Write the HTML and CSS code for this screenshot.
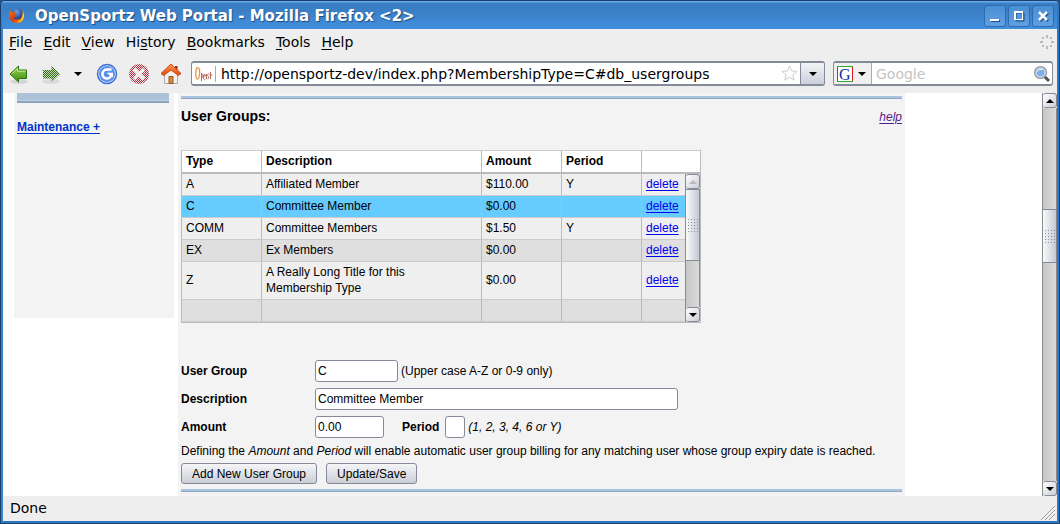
FILE: index.html
```html
<!DOCTYPE html>
<html lang="en">
<head>
<meta charset="utf-8">
<title>OpenSportz Web Portal</title>
<link rel="stylesheet" href="styles.css">
</head>
<body>
<div class="window">
  <header class="titlebar">
    <svg class="app-icon" width="16" height="16" viewBox="0 0 16 16">
      <defs><radialGradient id="globe" cx=".45" cy=".3" r=".7"><stop offset="0" stop-color="#6aa5e8"/><stop offset="1" stop-color="#12256b"/></radialGradient>
      <linearGradient id="fox" x1="0" y1="0" x2="1" y2="1"><stop offset="0" stop-color="#e87a1a"/><stop offset=".5" stop-color="#d83a10"/><stop offset="1" stop-color="#ffb31a"/></linearGradient></defs>
      <circle cx="8" cy="6.500" r="6.300" fill="url(#globe)"/>
      <path d="M1.500 2C-.5 5.500-.2 10 2 12.500c3.500 4 9.500 3.500 12-.5 2-3 1.700-6.500-.5-9.500.5 2 .3 4-.4 5.500-.6 2-1.800 3.200-3.600 3.200-2.500.4-4.500-.5-5-2.200 1 .4 2 .2 3-.6-1.500-.3-2-1.200-1.200-2.400l1.500-1C6.500 4 5 4 4 4.500 2.800 4 2 3.300 1.500 2z" fill="url(#fox)"/>
      <path d="M13.500 2.500c.6 2 .3 4-.4 5.500C13 11 11.500 13 8 14c4 .5 7-2.500 7-6.500 0-2-.5-3.500-1.500-5z" fill="#ffc832"/>
    </svg>
    <h1 class="title">OpenSportz Web Portal - Mozilla Firefox &lt;2&gt;</h1>
    <div class="window-buttons">
      <button class="win-btn" aria-label="Minimize"><svg width="12" height="12"><path d="M2 10h9v2H2z" fill="#1d4c80"/><path d="M1 9h9v2H1z" fill="#fff"/></svg></button>
      <button class="win-btn" aria-label="Maximize"><svg width="12" height="12"><path d="M3 3h8v8H3z" fill="none" stroke="#1d4c80"/><path d="M1 1h9v9H1zM3 3v6h6V3z" fill="#fff" fill-rule="evenodd"/></svg></button>
      <button class="win-btn" aria-label="Close"><svg width="12" height="12"><path d="M3 3l8 8M11 3l-8 8" stroke="#1d4c80" stroke-width="2.500"/><path d="M2 2l8 8M10 2l-8 8" stroke="#fff" stroke-width="2.500"/></svg></button>
    </div>
  </header>

  <nav class="menubar">
    <button><u>F</u>ile</button><button><u>E</u>dit</button><button><u>V</u>iew</button><button>Hi<u>s</u>tory</button><button><u>B</u>ookmarks</button><button><u>T</u>ools</button><button><u>H</u>elp</button>
    <svg class="throbber" width="14" height="14" viewBox="-7 -7 14 14"><g fill="#b9b9b9"><path d="M-1-7h2v3h-2zM-1 4h2v3h-2zM-7-1h3v2h-3zM4-1h3v2h-3zM-5-5h2v2h-2zM3-5h2v2h-2zM-5 3h2v2h-2zM3 3h2v2h-2z"/></g></svg>
  </nav>

  <div class="toolbar">
    <svg width="0" height="0" class="defs"><defs>
      <linearGradient id="green" x1="0" y1="0" x2="0" y2="1"><stop offset="0" stop-color="#9ed44e"/><stop offset="1" stop-color="#3a8c14"/></linearGradient>
      <pattern id="gdots" width="2" height="2" patternUnits="userSpaceOnUse"><path d="M0 0h1v1H0zM1 1h1v1H1z" fill="#2c6a12"/></pattern>
      <pattern id="rdots" width="2" height="2" patternUnits="userSpaceOnUse"><path d="M0 0h1v1H0zM1 1h1v1H1z" fill="#a83040"/></pattern>
      <linearGradient id="roof" x1="0" y1="0" x2="0" y2="1"><stop offset="0" stop-color="#ff9a55"/><stop offset="1" stop-color="#e2470b"/></linearGradient>
    </defs></svg>
    <button class="tool" aria-label="Back"><svg width="22" height="22"><ellipse cx="11" cy="18.500" rx="9" ry="2.500" fill="#000" opacity=".1"/><path d="M2 11L10.500 3V7H18.500V15.500H10.500V19Z" fill="url(#green)" stroke="#2c7610" stroke-linejoin="round"/><path d="M4 10.500L9.500 5.500V8.200H17.500" fill="none" stroke="#c8eb98"/></svg></button>
    <button class="tool" aria-label="Forward"><svg width="22" height="22"><ellipse cx="11" cy="18.500" rx="9" ry="2.500" fill="#000" opacity=".08"/><path d="M20 11L11.500 3V7H3V15.500H11.500V19Z" fill="#c9dcbf"/><path d="M20 11L11.500 3V7H3V15.500H11.500V19Z" fill="url(#gdots)"/></svg></button>
    <button class="tool tool-small" aria-label="Recent pages"><svg width="8" height="4"><path d="M0 0h8L4 4z"/></svg></button>
    <button class="tool" aria-label="Reload"><svg width="22" height="22"><circle cx="11" cy="11" r="9.500" fill="#dfeaff" stroke="#3f70d8" stroke-width="1.500"/><circle cx="11" cy="11" r="8" fill="#5a90ea"/><path d="M15.500 6.500H11A4.500 4.500 0 1 0 15.300 12" fill="none" stroke="#fff" stroke-width="2.600"/><path d="M10.500 9.700h6.500V14h-3v-1.500z" fill="#fff"/></svg></button>
    <button class="tool" aria-label="Stop"><svg width="22" height="22"><circle cx="11" cy="11" r="10" fill="#f4e0e0"/><circle cx="11" cy="11" r="10" fill="url(#rdots)"/><path d="M6 6L16 16M16 6L6 16" stroke="#f2efef" stroke-width="3.500"/></svg></button>
    <button class="tool" aria-label="Home"><svg width="22" height="22"><path d="M15 3h2.500v5H15z" fill="#b52a0c"/><path d="M4.500 11L11 6l6.500 5v9.500h-13z" fill="#f4f1ec" stroke="#aaa"/><path d="M9 13.500h4v7H9z" fill="#d98b45" stroke="#8f5525"/><path d="M11 1L21 10.500L18.500 12.500L11 7L3.500 12.500L1 10.500Z" fill="url(#roof)" stroke="#d6450e"/></svg></button>

    <div class="urlbox">
      <svg class="favicon" width="19" height="18"><path d="M3.500 2C1 5 1.500 14 3.500 14s3-9 1-11.500" fill="none" stroke="#e59a4a" stroke-width="1.300"/><path d="M7.500 8v8M7.500 9c2-1 2 4 0 4M9.500 11h2c0-3-2-2-2 1s1 3 2 2M12.500 14V9M13.500 14c1.500 0 1.500-2 .5-3s0-3 1-2M16.500 7v7M15.500 10h3" fill="none" stroke="#a64b3c" stroke-width=".8"/></svg>
      <input class="url" type="text" aria-label="Location" value="http://opensportz-dev/index.php?MembershipType=C#db_usergroups">
      <svg class="star" width="17" height="17"><path d="M8.500 1l2.100 5 5.400.4-4.200 3.500 1.400 5.300-4.700-2.900-4.700 2.900 1.400-5.300L1 6.400 6.400 6z" fill="#fff" stroke="#ccc"/></svg>
      <button class="urldrop" aria-label="Show history"><svg width="8" height="4"><path d="M0 0h8L4 4z"/></svg></button>
    </div>
    <div class="searchbox">
      <button class="engine" aria-label="Search engine">
        <svg width="16" height="16"><path d="M0 0h16v16H0z" fill="#fff"/><path d="M.5 15.500V.5" stroke="#2a5bd8"/><path d="M0 .5h16M0 15.500h16" stroke="#2aa82a"/><path d="M15.500 1v14" stroke="#d81818"/><text x="2" y="14" class="g-letter">G</text></svg>
        <svg width="8" height="4"><path d="M0 0h8L4 4z"/></svg>
      </button>
      <input class="search" type="text" aria-label="Search" placeholder="Google">
      <svg class="lens" width="18" height="18"><path d="M11 11l5 5" stroke="#555" stroke-width="3"/><circle cx="7.500" cy="7.500" r="5.800" fill="#7fb0e6" stroke="#999" stroke-width="1.500"/><circle cx="7.500" cy="7.500" r="4.600" fill="none" stroke="#e8f2ff"/><path d="M4.500 6.500c1-2 3-2.500 5-2" fill="none" stroke="#fff"/></svg>
    </div>
  </div>

  <div class="viewport">
    <div class="page">
      <aside class="sidebar">
        <div class="sidebar-head"></div>
        <a href="#maintenance">Maintenance +</a>
      </aside>
      <main class="panel">
        <div class="rule"></div>
        <div class="heading"><h2>User Groups:</h2><a class="help" href="#help">help</a></div>
        <table class="groups">
          <colgroup><col class="c-mid"><col class="c-wide"><col class="c-mid"><col class="c-mid"><col><col class="c-bar"></colgroup>
          <thead><tr><th>Type</th><th>Description</th><th>Amount</th><th>Period</th><th colspan="2"></th></tr></thead>
          <tbody>
            <tr><td>A</td><td>Affiliated Member</td><td>$110.00</td><td>Y</td><td><a href="#a">delete</a></td>
              <td class="bar-cell" rowspan="6"><div class="scrollbar"><button class="sb-btn" aria-label="Scroll up" disabled><svg width="8" height="4"><path d="M0 4h8L4 0z" fill="#bbb"/></svg></button><div class="sb-thumb"><i class="grip"></i></div><div class="sb-track"></div><button class="sb-btn" aria-label="Scroll down"><svg width="8" height="4"><path d="M0 0h8L4 4z"/></svg></button></div></td></tr>
            <tr class="selected"><td>C</td><td>Committee Member</td><td>$0.00</td><td></td><td><a href="#c">delete</a></td></tr>
            <tr><td>COMM</td><td>Committee Members</td><td>$1.50</td><td>Y</td><td><a href="#comm">delete</a></td></tr>
            <tr class="alt"><td>EX</td><td>Ex Members</td><td>$0.00</td><td></td><td><a href="#ex">delete</a></td></tr>
            <tr><td>Z</td><td>A Really Long Title for this<br>Membership Type</td><td>$0.00</td><td></td><td><a href="#z">delete</a></td></tr>
            <tr class="alt"><td>&nbsp;</td><td></td><td></td><td></td><td></td></tr>
          </tbody>
        </table>
        <form class="form">
          <div class="row"><label class="main-label" for="ug">User Group</label><input class="w-code" id="ug" type="text" value="C"><span>(Upper case A-Z or 0-9 only)</span></div>
          <div class="row"><label class="main-label" for="desc">Description</label><input class="w-desc" id="desc" type="text" value="Committee Member"></div>
          <div class="row"><label class="main-label" for="amt">Amount</label><input class="w-amt" id="amt" type="text" value="0.00"><label class="period-label" for="per">Period</label><input class="w-per" id="per" type="text"><em>(1, 2, 3, 4, 6 or Y)</em></div>
          <p>Defining the <em>Amount</em> and <em>Period</em> will enable automatic user group billing for any matching user whose group expiry date is reached.</p>
          <div class="actions"><button type="button">Add New User Group</button><button type="button">Update/Save</button></div>
        </form>
        <div class="rule"></div>
      </main>
    </div>
    <div class="scrollbar page-scroll"><button class="sb-btn" aria-label="Scroll page up"><svg width="8" height="4"><path d="M0 4h8L4 0z"/></svg></button><div class="sb-track upper"></div><div class="sb-thumb"><i class="grip"></i></div><div class="sb-track"></div><button class="sb-btn" aria-label="Scroll page down"><svg width="8" height="4"><path d="M0 0h8L4 4z"/></svg></button></div>
  </div>

  <footer class="statusbar"><span>Done</span><svg width="14" height="14"><path d="M0 14L14 0M4 14L14 4M8 14L14 8" stroke="#999"/><path d="M1 14L14 1M5 14L14 5M9 14L14 9" stroke="#fff" stroke-width=".7"/></svg></footer>
</div>
</body>
</html>
```
FILE: styles.css
```css
* { box-sizing: border-box; }
body { margin: 0; background: #1d4878; font-family: "DejaVu Sans", sans-serif; font-size: 14px; color: #000; }
button, input { font: inherit; color: inherit; margin: 0; }
svg { display: block; flex: none; }

.window { height: 100vh; display: flex; flex-direction: column; background: #eee; border: 3px solid #2d77c2; border-top: 0; border-left-color: #3a82ca; outline: 1px solid #1a3f6c; outline-offset: -1px; border-radius: 4px 4px 0 0; overflow: hidden; }

.titlebar { flex: none; height: 29px; display: flex; align-items: center; gap: 10px; margin: 0 -3px; padding: 2px 6px 0 9px; background: linear-gradient(#1a3f6c 0 1px, #66a8e8 1px 2px, #3a7fc6 3px, #3a7ec3 9px, #428fdf 100%); }
.title { flex: 1; margin: 0; font-size: 15px; font-weight: bold; color: #fff; text-shadow: 1px 1px 1px #1d4c80; }
.window-buttons { display: flex; gap: 2px; }
.win-btn { width: 22px; height: 22px; padding: 0; display: flex; align-items: center; justify-content: center; background: linear-gradient(#4a8fd3, #609fe2); border: 1px solid #2e6cad; border-radius: 3px; }

.menubar { flex: none; height: 26px; display: flex; align-items: center; gap: 11px; padding: 0 3px 0 6px; }
.menubar button { padding: 0; border: 0; background: none; }
.menubar u, .panel a, .sidebar a { text-underline-offset: 2px; }
.throbber { margin-left: auto; }

.toolbar { flex: none; height: 38px; display: flex; align-items: center; padding: 0 4px 1px 5px; }
.defs { width: 0; }
.tool { width: 22px; height: 22px; padding: 0; border: 0; background: none; margin-right: 10px; }
.tool-small { width: 8px; display: flex; align-items: center; margin: 0 14px 0 2px; }
.tool:last-of-type { margin-right: 9px; }
.urlbox, .searchbox { height: 25px; display: flex; align-items: center; border: 2px solid #858a99; border-width: 2px 1px; border-radius: 3px; background: #fff; overflow: hidden; }
.urlbox { flex: 1; }
.favicon { margin: 0 2px; }
.url, .search { flex: 1; min-width: 0; border: 0; padding: 0 4px; outline: 0; background: none; }
.url { border-left: 1px solid #aaa; padding-left: 5px; }
.star { margin: 0 2px; }
.urldrop { width: 24px; height: 100%; padding: 0; display: flex; align-items: center; justify-content: center; border: 0; border-left: 1px solid #858a99; background: linear-gradient(#f4f4f6, #ccd0da); }
.searchbox { width: 220px; margin-left: 8px; }
.engine { height: 100%; width: 38px; display: flex; align-items: center; gap: 5px; padding: 0 4px 0 3px; border: 0; border-right: 1px solid #aaa; background: #f0f0f0; }
.g-letter { font: 16px "Liberation Serif", serif; fill: #102ca0; }
.search::placeholder { color: #c4c4c4; opacity: 1; }
.lens { margin-right: 1px; }

.viewport { flex: 1; min-height: 0; display: flex; background: #fff; font: 12px/16px "Liberation Sans", sans-serif; }
.page { flex: 1; min-width: 0; overflow: hidden; display: flex; align-items: flex-start; gap: 4px; padding-left: 11px; }
.sidebar { flex: none; width: 160px; height: 225px; padding: 0 5px 0 3px; background: #f3f3f3; }
.sidebar-head { height: 10px; margin-bottom: 16px; background: linear-gradient(#adc1d8 0 7px, #bcd4ea 7px 8px, #8fa3bb 8px); }
.sidebar a { color: #03c; font-weight: bold; }
.panel { flex: 0 1 727px; padding: 3px 3px 4px; background: #f3f3f3; }
.rule { height: 3px; background: linear-gradient(#a8c6e0 0 2px, #8fa7c2 2px); }
.heading { display: flex; align-items: center; justify-content: space-between; padding: 8px 0 24px; }
.heading h2 { margin: 0; font-size: 14px; line-height: 19px; }
.help { font-style: italic; color: #551a8b; }

.groups { width: 520px; table-layout: fixed; border-spacing: 0; border-right: 1px solid #bbb; border-bottom: 1px solid #bbb; }
.c-mid { width: 80px; }
.c-wide { width: 220px; }
.c-bar { width: 15px; }
.groups th, .groups td { padding: 2px 0 3px 4px; border-left: 1px solid #bbb; border-bottom: 1px solid #ccc; text-align: left; background: #efefef; }
.groups th { padding: 2px 4px 3px; background: #fff; border-top: 1px solid #ccc; border-bottom: 2px solid #bbb; }
.groups .alt td { background: #dfdfdf; }
.groups .selected td { background: #6cf; }
.groups a { color: #00e; }
.groups .bar-cell { padding: 0; border: 0; height: 148px; vertical-align: top; }

.scrollbar { display: flex; flex-direction: column; width: 15px; height: 148px; border-left: 1px solid #8c8c8c; }
.sb-btn { flex: none; height: 15px; padding: 0; display: flex; align-items: center; justify-content: center; background: linear-gradient(135deg, #fff, #ccced6); border: 1px solid #858a99; border-left: 0; border-radius: 3px; }
.sb-thumb { flex: none; height: 72px; display: flex; align-items: center; justify-content: center; border: 1px solid #858a99; border-left: 0; background: linear-gradient(90deg, #fafafc, #c6c9d3); }
.grip { width: 12px; height: 15px; background: radial-gradient(circle, #8a8e9a 1px, transparent 1px) 0 0 / 3px 3px; }
.sb-track { flex: 1; background: linear-gradient(90deg, #c6c6c6, #dadada); border-right: 1px solid #8c8c8c; }
.page-scroll { height: 100%; }
.page-scroll .upper { flex: 0 0 101px; }
.page-scroll .sb-thumb { height: 54px; }

.form { padding-top: 37px; padding-bottom: 5px; }
.row { display: flex; align-items: center; gap: 3px; margin-bottom: 6px; }
.main-label { width: 131px; font-weight: bold; }
.period-label { margin-left: 15px; margin-right: 3px; font-weight: bold; }
.row input { height: 22px; padding: 0 2px; border: 1px solid #858a99; border-radius: 3px; background: #fff; }
.w-code { width: 83px; }
.w-desc { width: 363px; }
.w-amt { width: 69px; }
.w-per { width: 20px; }
.form p { margin: 0 0 4px; padding-top: 0; }
.row:nth-of-type(3) { margin-bottom: 5px; }
.actions { display: flex; gap: 9px; }
.actions button { height: 21px; padding: 0 10px; border: 1px solid #858a99; border-radius: 3px; background: linear-gradient(#f6f6f8, #cbced6); line-height: 16px; }

.statusbar { flex: none; height: 25px; display: flex; align-items: center; justify-content: space-between; padding: 0 2px 1px 7px; }
.statusbar svg { align-self: flex-end; }
```
